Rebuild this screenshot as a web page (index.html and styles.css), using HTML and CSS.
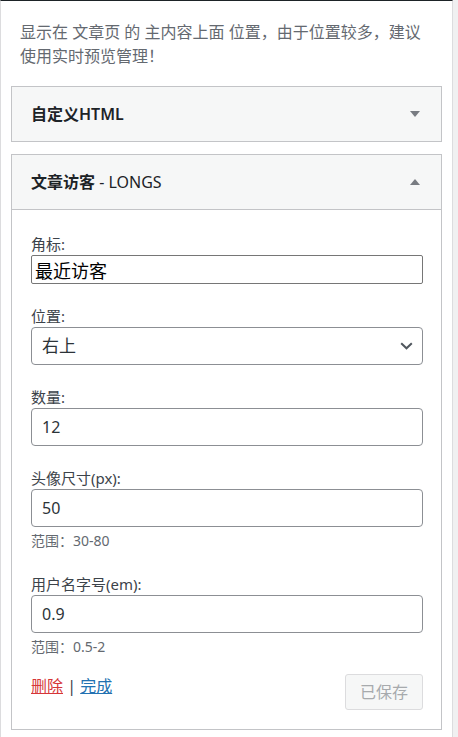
FILE: index.html
```html
<!DOCTYPE html>
<html lang="zh-CN">
<head>
<meta charset="utf-8">
<title>Widgets</title>
<link rel="stylesheet" href="styles.css">
</head>
<body>
<div class="panel">
  <p class="desc">显示在 文章页 的 主内容上面 位置，由于位置较多，建议使用实时预览管理！</p>

  <div class="widget">
    <div class="widget-top">
      <h3 class="widget-title">自定义HTML</h3>
      <span class="arrow arrow-down"></span>
    </div>
  </div>

  <div class="widget">
    <div class="widget-top">
      <h3 class="widget-title">文章访客 <span class="in-title">- LONGS</span></h3>
      <span class="arrow arrow-up"></span>
    </div>
    <div class="widget-inside">
      <div class="field">
        <label class="label">角标:</label>
        <input class="plain-input" type="text" value="最近访客">
      </div>
      <div class="field">
        <label class="label">位置:</label>
        <div class="select">
          <span class="select-text">右上</span>
          <svg class="chevron" width="13" height="8" viewBox="0 0 13 8"><path d="M1.2 1.2 L6.5 6.3 L11.8 1.2" fill="none" stroke="#50575e" stroke-width="2"/></svg>
        </div>
      </div>
      <div class="field">
        <label class="label">数量:</label>
        <input class="wp-input" type="text" value="12">
      </div>
      <div class="field field-hint">
        <label class="label">头像尺寸(px):</label>
        <input class="wp-input" type="text" value="50">
        <p class="hint">范围：30-80</p>
      </div>
      <div class="field field-last">
        <label class="label">用户名字号(em):</label>
        <input class="wp-input" type="text" value="0.9">
        <p class="hint">范围：0.5-2</p>
      </div>
      <div class="actions">
        <div class="links"><a class="link-delete" href="#">删除</a> <span class="sep">|</span> <a class="link-done" href="#">完成</a></div>
        <button class="btn-saved" type="button" disabled>已保存</button>
      </div>
    </div>
  </div>
</div>
</body>
</html>
```

FILE: styles.css
```css
html, body {
  margin: 0;
  padding: 0;
}

body {
  background: #f0f0f1;
  font-family: "Noto Sans", "Noto Sans CJK SC", sans-serif;
  color: #3c434a;
  width: 458px;
  height: 737px;
  overflow: hidden;
}

.panel {
  box-sizing: border-box;
  width: 453px;
  height: 737px;
  background: #fff;
  border-top: 1px solid #1d2327;
  border-left: 1px solid #dcdcde;
  border-right: 1px solid #dcdcde;
  padding: 0 10px;
}

.desc {
  margin: 19px 9px 18px;
  font-size: 16px;
  line-height: 24px;
  color: #646970;
}

.widget {
  border: 1px solid #c3c4c7;
  background: #fff;
  margin-bottom: 12px;
}

.widget-top {
  height: 54px;
  background: #f6f7f7;
  display: flex;
  align-items: center;
  justify-content: space-between;
  padding: 0 21px 0 19px;
}

.widget-title {
  margin: 0;
  font-size: 16px;
  line-height: 24px;
  font-weight: 600;
  color: #1d2327;
}

.in-title {
  font-weight: 400;
}

.arrow {
  width: 0;
  height: 0;
  border-left: 5px solid transparent;
  border-right: 5px solid transparent;
}

.arrow-down {
  border-top: 6px solid #787c82;
}

.arrow-up {
  border-bottom: 6px solid #787c82;
}

.widget-inside {
  border-top: 1px solid #c3c4c7;
  padding: 23px 18px 19px 19px;
}

.field {
  margin-bottom: 21px;
}

.field-hint {
  margin-bottom: 22px;
}

.field-last {
  margin-bottom: 17px;
}

.label {
  display: block;
  font-size: 15px;
  line-height: 22px;
  color: #3c434a;
}

.plain-input {
  display: block;
  box-sizing: border-box;
  width: 392px;
  height: 29px;
  margin: 0;
  padding: 0 3px;
  border: 1px solid #767676;
  border-radius: 2px;
  font-family: "Noto Sans", "Noto Sans CJK SC", sans-serif;
  font-size: 18px;
  color: #000;
  background: #fff;
}

.wp-input,
.select {
  display: block;
  box-sizing: border-box;
  width: 392px;
  height: 38px;
  margin: 0;
  padding: 0 10px;
  border: 1px solid #8c8f94;
  border-radius: 4px;
  font-family: "Noto Sans", "Noto Sans CJK SC", sans-serif;
  font-size: 16px;
  color: #2c3338;
  background: #fff;
}

.select {
  display: flex;
  align-items: center;
  justify-content: space-between;
  padding-right: 9px;
}

.select-text {
  font-size: 17px;
  line-height: 24px;
  color: #2c3338;
}

.chevron {
  display: block;
}

.hint {
  margin: 4px 0 0;
  font-size: 14px;
  line-height: 20px;
  color: #646970;
}

.actions {
  display: flex;
  justify-content: space-between;
  align-items: flex-start;
}

.links {
  font-size: 16px;
  line-height: 24px;
  color: #3c434a;
}

.link-delete {
  color: #d63638;
  text-decoration: underline;
}

.link-done {
  color: #2271b1;
  text-decoration: underline;
}

.sep {
  color: #3c434a;
}

.btn-saved {
  box-sizing: border-box;
  height: 36px;
  padding: 0 14px;
  margin: 0;
  white-space: nowrap;
  border: 1px solid #dcdcde;
  border-radius: 3px;
  background: #f6f7f7;
  color: #a7aaad;
  font-family: "Noto Sans", "Noto Sans CJK SC", sans-serif;
  font-size: 16px;
  line-height: 34px;
}
```
